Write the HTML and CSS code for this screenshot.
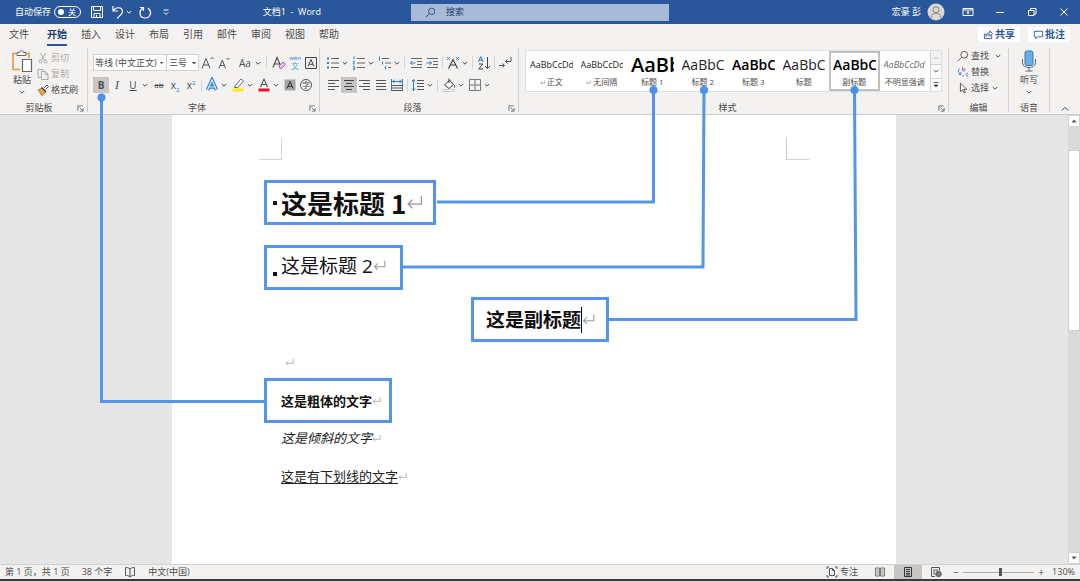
FILE: index.html
```html
<!DOCTYPE html>
<html lang="zh-CN">
<head>
<meta charset="utf-8">
<title>文档1 - Word</title>
<link rel="stylesheet" href="styles.css">
</head>
<body>
<svg class="defs" aria-hidden="true">
  <symbol id="chev" viewBox="0 0 8 8"><path d="M1.8 3 4 5.2 6.2 3" fill="none" stroke="currentColor"/></symbol>
  <symbol id="ret" viewBox="0 0 16 16"><path d="M14.5 2v7.5H2M6 5.500 2 9.500l4 4" fill="none" stroke="currentColor" stroke-width="1.3"/></symbol>
  <symbol id="launch" viewBox="0 0 8 8"><path d="M1 6.500V1h5.500M3 3l3.500 3.500M7 3.500V7H3.500" fill="none" stroke="#666"/></symbol>
  <symbol id="mag" viewBox="0 0 14 14"><circle cx="8.500" cy="5.500" r="4" fill="none" stroke="currentColor"/><path d="M5.500 8.500 1 13" stroke="currentColor"/></symbol>
</svg>

<header class="titlebar">
  <div class="tb-left">
    <label class="autosave">自动保存
      <span class="toggle"><input type="checkbox"><span>关</span></span>
    </label>
    <button class="tb-btn save" aria-label="保存"><svg viewBox="0 0 14 14"><path d="M1.500 1.500h11v11h-11zM3.500 1.500v4h7v-4M4 12.500v-4h6v4M6.500 10v2.500" fill="none" stroke="#fff"/></svg></button>
    <button class="tb-btn undo" aria-label="撤消"><svg viewBox="0 0 14 14"><path d="M2 1v5h5M2.500 5.500C5 1.500 11 2 11.500 6c.2 3-3 5-5.500 7.500" fill="none" stroke="#fff" stroke-width="1.2"/></svg></button>
    <button class="chev light" aria-label="撤消选项"><svg><use href="#chev"/></svg></button>
    <button class="tb-btn redo" aria-label="重复"><svg viewBox="0 0 14 14"><path d="M2 2.500h3.500V6M5.200 3C0 6 1.500 13 7 13s7.500-6.500 3-10" fill="none" stroke="#fff" stroke-width="1.200"/></svg></button>
    <button class="tb-btn more" aria-label="自定义"><svg viewBox="0 0 14 14"><path d="M4.500 5h5M5 7.500l2 2 2-2" fill="none" stroke="#fff"/></svg></button>
    <span class="doc-title">文档1&nbsp; -&nbsp; Word</span>
  </div>
  <label class="search"><svg><use href="#mag"/></svg><input type="text" placeholder="搜索" aria-label="搜索"></label>
  <div class="tb-right">
    <span class="user">宏豪 彭</span>
    <svg class="avatar" viewBox="0 0 18 18"><circle cx="9" cy="9" r="8.500" fill="#d9d6d4"/><circle cx="9" cy="6.800" r="3" fill="none" stroke="#8b8684"/><path d="M4 14.800c0-6 10-6 10 0" fill="none" stroke="#8b8684"/></svg>
    <button class="win" aria-label="功能区显示选项"><svg viewBox="0 0 12 12"><path d="M1 2.500h10v7H1zM1 4h10M6 8.500v-3M4.500 6.800 6 5.500l1.500 1.300" fill="none" stroke="#fff"/></svg></button>
    <button class="win" aria-label="最小化"><svg viewBox="0 0 12 12"><path d="M2 6.500h8" stroke="#fff"/></svg></button>
    <button class="win" aria-label="还原"><svg viewBox="0 0 12 12"><path d="M2.500 4.500h5.500v5H2.500zM4.500 4.500v-2h5.500v5.500H8" fill="none" stroke="#fff"/></svg></button>
    <button class="win" aria-label="关闭"><svg viewBox="0 0 12 12"><path d="m2.500 2.500 7 7m0-7-7 7" stroke="#fff"/></svg></button>
  </div>
</header>

<nav class="tabs">
  <a class="file" href="#">文件</a><a class="active" href="#">开始</a><a href="#">插入</a><a href="#">设计</a><a href="#">布局</a><a href="#">引用</a><a href="#">邮件</a><a href="#">审阅</a><a href="#">视图</a><a href="#">帮助</a>
  <div class="actions">
    <button><svg viewBox="0 0 12 12"><path d="M3.500 5.500h-2v5h8V7M3.500 8c0-3 2-4 4-4V2l3 3-3 3V6c-1.500 0-3 .5-4 2" fill="none" stroke="#2b579a"/></svg>共享</button>
    <button><svg viewBox="0 0 12 12"><path d="M1.500 2.500h9v6H5l-2 2v-2H1.500z" fill="none" stroke="#2b579a"/></svg>批注</button>
  </div>
</nav>

<section class="ribbon">
  <div class="group clipboard">
    <div class="clip-body">
      <button class="paste"><svg viewBox="0 0 22 23"><path d="M5.500 3.500H2v16h7M14.500 3.500H18V8" fill="none" stroke="#e8963c" stroke-width="1.600"/><path d="M6 5.500v-3h2.500c0-2.500 4-2.500 4 0H15v3z" fill="#f3f2f1" stroke="#666"/><path d="M11.500 9.500h9v12h-9z" fill="#fff" stroke="#666" stroke-width="1.200"/></svg><span>粘贴</span><svg class="c"><use href="#chev"/></svg></button>
      <div class="clip-list">
        <button class="off"><svg viewBox="0 0 12 12"><path d="m3.500 1 4 7.500M8.500 1l-4 7.500" stroke="#aaa" fill="none"/><circle cx="3.500" cy="9.500" r="1.500" fill="none" stroke="#aaa"/><circle cx="8.500" cy="9.500" r="1.500" fill="none" stroke="#aaa"/></svg>剪切</button>
        <button class="off"><svg viewBox="0 0 12 12"><path d="M4 9.500H1v-8h5V3M4.500 3.500h4l2.500 2.500v5.500H4.500zM8 3.500v3h3" fill="none" stroke="#aaa"/></svg>复制</button>
        <button><svg viewBox="0 0 12 12"><path d="m7 4 3-3 1.500 1.500-3 3" fill="#fff" stroke="#555"/><path d="m1 6 4-2 4 4-4 3.500z" fill="#f0a050" stroke="#c8702a"/><path d="m4.500 3.500 4.500 4.500" stroke="#444" stroke-width="1.500"/></svg>格式刷</button>
      </div>
    </div>
    <div class="group-label">剪贴板<button aria-label="剪贴板选项"><svg><use href="#launch"/></svg></button></div>
  </div>

  <div class="group">
    <div class="row">
      <select class="font-name" aria-label="字体"><option>等线 (中文正文)</option></select><select class="font-size" aria-label="字号"><option>三号</option></select>
      <button class="ib" aria-label="增大字号"><svg viewBox="0 0 16 16"><path d="m3 13.500 4-10 4 10M4.300 10h5.400M11.500 4 13 2.500 14.500 4" fill="none" stroke="#555"/></svg></button>
      <button class="ib" aria-label="减小字号"><svg viewBox="0 0 16 16"><path d="m4 13.500 3.300-8.500 3.300 8.500M5 10.500h4.500M11.500 3 13 4.500 14.500 3" fill="none" stroke="#555"/></svg></button>
      <button class="ib case">Aa</button><button class="chev" aria-label="更改大小写"><svg><use href="#chev"/></svg></button>
      <i class="sep"></i>
      <button class="ib" aria-label="清除格式"><svg viewBox="0 0 16 16"><path d="m2 12.500 4-10 3.500 8M3.300 9h5" fill="none" stroke="#444" stroke-width="1.100"/><path d="m8 11 4-4 2.500 2.500-4 4H9z" fill="#e3c7ec" stroke="#a35bb8"/></svg></button>
      <button class="ib pinyin" aria-label="拼音指南"><small>wén</small><b>文</b></button>
      <button class="ib" aria-label="字符边框"><svg viewBox="0 0 16 16"><path d="M2.500 2.500h11v11h-11zM5 11.500 8 4.500l3 7M6 9.300h4" fill="none" stroke="#444"/></svg></button>
    </div>
    <div class="row">
      <button class="ib on"><b>B</b></button><button class="ib serif"><i>I</i></button><button class="ib"><u>U</u></button><button class="chev" aria-label="下划线选项"><svg><use href="#chev"/></svg></button><span class="gap"></span>
      <button class="ib small"><s>ab</s></button><button class="ib" aria-label="下标"><span>x<sub>2</sub></span></button><button class="ib" aria-label="上标"><span>x<sup>2</sup></span></button>
      <i class="sep tight"></i>
      <button class="ib" aria-label="文本效果"><svg viewBox="0 0 16 16"><path d="M3.500 13 8 3l4.500 10M5.500 10h5" fill="none" stroke="#2f7fc9" stroke-width="3.400"/><path d="M3.500 13 8 3l4.500 10M5.500 10h5" fill="none" stroke="#d8ecfb" stroke-width="1.200"/></svg></button><button class="chev" aria-label="文本效果选项"><svg><use href="#chev"/></svg></button><span class="gap"></span>
      <button class="ib" aria-label="突出显示"><svg viewBox="0 0 16 16"><path d="m5 9 6-7 2.500 2L8 10.500H4.500z" fill="#fff" stroke="#666"/><path d="M2.500 11.500h11v3h-11z" fill="#ffef00"/></svg></button><button class="chev" aria-label="突出显示选项"><svg><use href="#chev"/></svg></button><span class="gap"></span>
      <button class="ib" aria-label="字体颜色"><svg viewBox="0 0 16 16"><path d="m4.500 10 3.500-8 3.500 8M5.700 7.500h4.600" fill="none" stroke="#555" stroke-width="1.100"/><path d="M2.500 11.500h11v3h-11z" fill="#e81123"/></svg></button><button class="chev" aria-label="字体颜色选项"><svg><use href="#chev"/></svg></button><span class="gap"></span>
      <button class="ib" aria-label="字符底纹"><svg viewBox="0 0 16 16"><path d="M2.500 2.500h11v11h-11z" fill="#a6a6a6"/><path d="m5 11.500 3-7 3 7M6 9.300h4" fill="none" stroke="#333"/></svg></button>
      <button class="ib ring" aria-label="带圈字符"><span>字</span></button>
    </div>
    <div class="group-label">字体<button aria-label="字体选项"><svg><use href="#launch"/></svg></button></div>
  </div>

  <div class="group">
    <div class="row">
      <button class="ib" aria-label="项目符号"><svg viewBox="0 0 16 16"><path d="M6 3.500h8M6 8h8M6 12.500h8" stroke="#666"/><path d="M2 2.500h2v2H2zM2 7h2v2H2zM2 11.500h2v2H2z" fill="#2b7cc4"/></svg></button><button class="chev" aria-label="项目符号选项"><svg><use href="#chev"/></svg></button><span class="gap"></span>
      <button class="ib" aria-label="编号"><svg viewBox="0 0 16 16"><path d="M6 3.500h8M6 8h8M6 12.500h8" stroke="#666"/><path d="M3 1.500v3M2 6.500h1.500L2 9h2M2 11.500h1.500v3H2M2 13h1.500" fill="none" stroke="#2b7cc4" stroke-width=".9"/></svg></button><button class="chev" aria-label="编号选项"><svg><use href="#chev"/></svg></button><span class="gap"></span>
      <button class="ib" aria-label="多级列表"><svg viewBox="0 0 16 16"><path d="M5 3.500h7M8 8h6M11 12.500h3" stroke="#666"/><path d="M2.500 1.500v4M5.500 6.500v3M8.500 11v3" stroke="#2b7cc4"/></svg></button><button class="chev" aria-label="多级列表选项"><svg><use href="#chev"/></svg></button>
      <i class="sep close"></i>
      <button class="ib" aria-label="减少缩进"><svg viewBox="0 0 16 16"><path d="M3 3.500h11M9 6.500h5M9 9.500h5M3 12.500h11" stroke="#666"/><path d="M7.500 8H2.500m2-2-2 2 2 2" fill="none" stroke="#2b7cc4"/></svg></button>
      <button class="ib" aria-label="增加缩进"><svg viewBox="0 0 16 16"><path d="M3 3.500h11M9 6.500h5M9 9.500h5M3 12.500h11" stroke="#666"/><path d="M2.500 8h5m-2-2 2 2-2 2" fill="none" stroke="#2b7cc4"/></svg></button>
      <i class="sep tight"></i>
      <button class="ib" aria-label="中文版式"><svg viewBox="0 0 16 16"><path d="m3.500 13.500 4.500-9 4.500 9M5.500 10h5" fill="none" stroke="#444" stroke-width="1.200"/><path d="m2 2 3 3m0-3L2 5m9-3 3 3m0-3-3 3" stroke="#2b7cc4" stroke-width=".9"/></svg></button><button class="chev" aria-label="中文版式选项"><svg><use href="#chev"/></svg></button>
      <i class="sep close"></i>
      <button class="ib" aria-label="排序"><svg viewBox="0 0 16 16"><path d="m2.500 7 2.300-5.500L7 7M3.500 5.200h2.700" fill="none" stroke="#2b7cc4"/><path d="M2.800 9h4l-4 5h4.400M11.500 2v11.500M9 11l2.500 2.500L14 11" fill="none" stroke="#444"/></svg></button>
      <i class="sep tight"></i>
      <button class="ib" aria-label="显示编辑标记"><svg viewBox="0 0 16 16"><path d="M14 2v4.500H8.500M10.500 4.500l-2 2 2 2M2 10.500h5.500M5.500 8.500l2 2-2 2" fill="none" stroke="#555"/></svg></button>
    </div>
    <div class="row">
      <button class="ib" aria-label="左对齐"><svg viewBox="0 0 16 16"><path d="M3 3.500h11M3 6.500h7M3 9.500h11M3 12.500h7" stroke="#555"/></svg></button>
      <button class="ib on" aria-label="居中"><svg viewBox="0 0 16 16"><path d="M3 3.500h10M5 6.500h6M3 9.500h10M5 12.500h6" stroke="#444"/></svg></button>
      <button class="ib" aria-label="右对齐"><svg viewBox="0 0 16 16"><path d="M2 3.500h11M6 6.500h7M2 9.500h11M6 12.500h7" stroke="#555"/></svg></button>
      <button class="ib" aria-label="两端对齐"><svg viewBox="0 0 16 16"><path d="M3 3.500h10M3 6.500h10M3 9.500h10M3 12.500h10" stroke="#555"/></svg></button>
      <button class="ib" aria-label="分散对齐"><svg viewBox="0 0 16 16"><path d="M3 8.500h10M3 11h10M3 13.500h10" stroke="#555"/><path d="M2.500 2v12M13.500 2v12M3 4.500h10M5.500 2.800 4 4.500l1.500 1.700M10.500 2.800 12 4.500l-1.500 1.700" fill="none" stroke="#2b7cc4"/></svg></button>
      <i class="sep tight"></i>
      <button class="ib" aria-label="行距"><svg viewBox="0 0 16 16"><path d="M7 3.500h7M7 6.500h7M7 9.500h7M7 12.500h7" stroke="#555"/><path d="M3.500 2.500v11M1.800 4.500l1.700-2 1.700 2M1.800 11.500l1.700 2 1.700-2" fill="none" stroke="#2b7cc4"/></svg></button><button class="chev" aria-label="行距选项"><svg><use href="#chev"/></svg></button>
      <i class="sep close"></i>
      <button class="ib" aria-label="底纹"><svg viewBox="0 0 16 16"><path d="m3.500 8 5-5 4 4.500-4.500 4zM8 6V1.500M12.500 7.500c1.500 1 1.500 2.500 1 3" fill="none" stroke="#444"/><path d="M2 12.500h11v2H2z" fill="#fff" stroke="#aaa" stroke-width=".6"/></svg></button><button class="chev" aria-label="底纹选项"><svg><use href="#chev"/></svg></button><span class="gap"></span>
      <button class="ib" aria-label="边框"><svg viewBox="0 0 16 16"><path d="M2.500 2.500h11v11h-11zM8 2.500v11M2.500 8h11" fill="none" stroke="#777"/></svg></button><button class="chev" aria-label="边框选项"><svg><use href="#chev"/></svg></button>
    </div>
    <div class="group-label">段落<button aria-label="段落选项"><svg><use href="#launch"/></svg></button></div>
  </div>

  <div class="group styles">
    <div class="gallery">
      <button class="style"><span class="sample s-body">AaBbCcDd</span><span class="name"><svg class="mini"><use href="#ret"/></svg>正文</span></button>
      <button class="style"><span class="sample s-body">AaBbCcDd</span><span class="name"><svg class="mini"><use href="#ret"/></svg>无间隔</span></button>
      <button class="style"><span class="sample s-h1">AaBb</span><span class="name">标题 1</span></button>
      <button class="style"><span class="sample s-h2">AaBbC</span><span class="name">标题 2</span></button>
      <button class="style"><span class="sample s-h3">AaBbC</span><span class="name">标题 3</span></button>
      <button class="style"><span class="sample s-h2">AaBbC</span><span class="name">标题</span></button>
      <button class="style selected"><span class="sample s-h3">AaBbC</span><span class="name">副标题</span></button>
      <button class="style"><span class="sample s-em">AaBbCcDd</span><span class="name">不明显强调</span></button>
      <div class="gal-nav">
        <button class="dim" aria-label="上一行"><svg viewBox="0 0 8 8"><path d="M2 5l2-2 2 2" fill="none" stroke="#bbb"/></svg></button>
        <button aria-label="下一行"><svg><use href="#chev"/></svg></button>
        <button aria-label="其他样式"><svg viewBox="0 0 8 8"><path d="M1.500 1.500h5M2 4h4L4 6z" fill="#444" stroke="#444" stroke-width=".8"/></svg></button>
      </div>
    </div>
    <div class="group-label">样式<button aria-label="样式选项"><svg><use href="#launch"/></svg></button></div>
  </div>

  <div class="group editing">
    <div class="edit-list">
      <button><svg viewBox="0 0 14 14"><use href="#mag"/></svg>查找<svg class="c far"><use href="#chev"/></svg></button>
      <button><svg viewBox="0 0 14 14"><path d="M6.500 1v5M6.500 4.500c0-2 3-2 3 0s-3 2-3 0" fill="none" stroke="#a35bb8"/><path d="M13 8.500c-3-1-3.500 4 0 3M3.500 3C1 4 1 8 4 9.500M4.500 7v2.800H2M6 11.500h2" fill="none" stroke="#2b7cc4"/></svg>替换</button>
      <button><svg viewBox="0 0 14 14"><path d="M4 1.500v10L6.500 9l1.700 3.800 1.600-.8L8 8.500h3.500z" fill="#fff" stroke="#444"/></svg>选择<svg class="c"><use href="#chev"/></svg></button>
    </div>
    <div class="group-label">编辑</div>
  </div>

  <div class="group voice">
    <button class="dictate"><svg viewBox="0 0 16 22"><path d="M1.500 9v4c0 6 13 6 13 0V9M8 17.500V21M4.500 21h7" fill="none" stroke="#666"/><rect x="4" y="1" width="8" height="14.500" rx="2" fill="#69afe5" stroke="#2b7cc4"/></svg><span>听写</span><svg class="c"><use href="#chev"/></svg></button>
    <div class="group-label">语音</div>
  </div>
  <div class="collapse"><button aria-label="折叠功能区"><svg viewBox="0 0 8 8"><path d="M.8 5.500 4 2.300l3.200 3.200" fill="none" stroke="#444"/></svg></button></div>
</section>

<main class="workspace">
  <div class="desk">
    <article class="page">
      <div class="margins"><i class="corner l"></i><i class="corner r"></i></div>
      <h1 class="callout h1"><i class="dot"></i>这是标题 1<svg><use href="#ret"/></svg></h1>
      <h2 class="callout h2"><i class="dot"></i>这是标题 2<svg><use href="#ret"/></svg></h2>
      <p class="callout subtitle">这是副标题<i class="caret"></i><svg><use href="#ret"/></svg></p>
      <p class="line empty"><svg><use href="#ret"/></svg></p>
      <p class="callout strong"><b>这是粗体的文字</b><svg><use href="#ret"/></svg></p>
      <p class="line"><em>这是倾斜的文字</em><svg><use href="#ret"/></svg></p>
      <p class="line last"><u>这是有下划线的文字</u><svg><use href="#ret"/></svg></p>
    </article>
  </div>
  <div class="scroll">
    <button aria-label="向上滚动"><svg viewBox="0 0 8 8"><path d="M1.500 5.500h5L4 2.500z" fill="#555"/></svg></button>
    <div class="track"><div class="thumb"></div></div>
    <button aria-label="向下滚动"><svg viewBox="0 0 8 8"><path d="M1.500 2.500h5L4 5.500z" fill="#555"/></svg></button>
  </div>
</main>

<footer class="status">
  <span class="pages">第 1 页，共 1 页</span><span class="words">38 个字</span>
  <svg class="book" viewBox="0 0 12 12"><path d="M6 3C4.500 1.500 3 1.500 1.500 1.500v8c1.500 0 3 0 4.500 1.500 1.500-1.500 3-1.500 4.500-1.500v-8C9 1.500 7.500 1.500 6 3zv8" fill="none" stroke="#555"/></svg>
  <span>中文(中国)</span>
  <div class="views">
    <button class="focus"><svg viewBox="0 0 12 12"><path d="M3 1H1v2M1 9v2h2M9 11h2V9M3.500 2.500h3l2 2v5h-5zM6.500 2.500v2h2M9 1h2v2" fill="none" stroke="#555"/></svg>专注</button>
    <button class="view" aria-label="阅读视图"><svg viewBox="0 0 12 12"><path d="M1.500 2h4v8h-4zM6.500 2h4v8h-4zM2.500 4h2m-2 2h2m-2 2h2m3-4h2m-2 2h2m-2 2h2" fill="none" stroke="#666" stroke-width=".9"/></svg></button>
    <button class="view on" aria-label="页面视图"><svg viewBox="0 0 12 12"><path d="M2.500 1.500h7v9h-7zM4 3.500h4M4 5.500h4M4 7.500h4M4 9h4" fill="none" stroke="#333"/></svg></button>
    <button class="view" aria-label="Web 版式"><svg viewBox="0 0 12 12"><path d="M5 10.500H1.500v-9h8v3M3 4h5M3 6h2M3 8h2" fill="none" stroke="#555"/><circle cx="8.500" cy="8" r="2.800" fill="#777" stroke="#444" stroke-width=".7"/></svg></button>
    <button class="zoom-btn" aria-label="缩小">−</button>
    <input type="range" min="0" max="100" value="53" aria-label="缩放">
    <button class="zoom-btn" aria-label="放大">+</button>
    <span class="pct">130%</span>
  </div>
</footer>

<svg class="links" viewBox="0 0 1080 581" aria-hidden="true">
  <g fill="none" stroke="#5495e8" stroke-width="3">
    <path d="M101.500 97v304.500H265"/><path d="M437 202H653.500V90"/><path d="M402 267H703l1-177"/><path d="M608 319.500H856L854.500 90"/>
  </g>
  <g fill="#4a90ec"><circle cx="101.500" cy="97.500" r="4"/><circle cx="653.500" cy="90" r="4"/><circle cx="704" cy="90" r="4"/><circle cx="854.500" cy="90" r="4"/></g>
</svg>
</body>
</html>
```
FILE: styles.css
```css
* { box-sizing: border-box; }
body {
  margin: 0;
  min-height: 100vh;
  display: flex;
  flex-direction: column;
  font-family: "Open Sans", "Noto Sans CJK SC", sans-serif;
  font-size: 9px;
  line-height: 12px;
  color: #4c4c4c;
  background: #f3f2f1;
  overflow: hidden;
}
button, input, select { font: inherit; color: inherit; }
button { border: 0; padding: 0; background: none; display: flex; align-items: center; justify-content: center; }
h1, h2, p { margin: 0; font-weight: normal; }
a { color: inherit; text-decoration: none; }
svg { flex: none; display: block; }
.defs { position: absolute; width: 0; height: 0; }

/* title bar */
.titlebar { display: grid; grid-template-columns: 1fr 258px 1fr; height: 24px; align-items: center; background: #2a579a; color: #fff; }
.tb-left, .tb-right { display: flex; align-items: center; }
.tb-left { padding-left: 15px; }
.autosave { display: flex; align-items: center; gap: 3px; }
.toggle { display: flex; align-items: center; width: 27px; height: 12px; padding: 0 3px; gap: 4px; border: 1px solid #fff; border-radius: 6px; font-size: 8px; }
.toggle input { appearance: none; width: 6px; height: 6px; margin: 0; border-radius: 50%; background: #fff; }
.tb-btn svg { width: 14px; height: 14px; }
.save { margin-left: 9px; }
.undo { margin-left: 7px; }
.redo { margin-left: 5px; }
.more { margin-left: 7px; }
.doc-title { margin-left: auto; margin-right: 90px; }
.search { display: flex; align-items: center; height: 17px; padding-left: 14px; gap: 10px; background: #a7bad8; color: #1f3c6e; }
.search svg { width: 11px; height: 11px; }
.search input { flex: 1; min-width: 0; border: 0; padding: 0; background: none; outline: none; }
.search input::placeholder { color: #1f3c6e; opacity: 1; }
.tb-right { justify-content: flex-end; padding-right: 10px; }
.user { margin-right: 6px; }
.avatar { width: 18px; height: 18px; margin-right: 17px; }
.win svg { width: 12px; height: 12px; }
.win + .win { margin-left: 20px; }

/* tabs */
.tabs { display: flex; gap: 14px; height: 24px; padding: 2px 10px 0 9px; font-size: 10px; line-height: 17px; }
.tabs > a { height: 20px; }
.tabs .file { margin-right: 4px; }
.tabs .active { color: #1f3c6e; font-weight: bold; border-bottom: 2px solid #2a579a; }
.actions { display: flex; gap: 8px; margin-left: auto; padding-top: 1px; }
.actions button { height: 15px; padding: 0 5px; gap: 1px; background: #fff; color: #2b579a; font-weight: bold; font-size: 10px; }
.actions svg { width: 11px; height: 11px; }

/* ribbon */
.ribbon { display: grid; grid-template-columns: 88px 232px 199px 1fr 60px 41px 30px; height: 67px; border-bottom: 1px solid #cfcdcb; }
.group { display: grid; grid-template-rows: 29px 16px 1fr; border-right: 1px solid #d2d0ce; margin-bottom: 2px; padding-left: 5px; }
.row { display: flex; align-items: center; }
.group-label { grid-row: 3; align-self: end; display: grid; grid-template-columns: 1fr auto; column-gap: 8px; height: 10px; align-items: center; text-align: center; margin-right: 3px; }
.group-label button svg { width: 7px; height: 7px; }
.ib { width: 16px; height: 16px; flex: none; font-size: 10px; }
.ib svg { width: 16px; height: 16px; }
.ib.on { background: #c8c6c4; }
.ib.small { font-size: 8px; }
.ib.serif { font-family: "Liberation Serif", serif; font-size: 12px; }
.ib sub, .ib sup { font-size: 6px; line-height: 0; color: #2b7cc4; }
.ib.case { width: 18px; margin-left: 5px; }
.pinyin { flex-direction: column; }
.pinyin small { font-size: 6px; line-height: 5px; color: #2b7cc4; }
.pinyin b { font-size: 8px; line-height: 9px; font-weight: normal; color: #4da3d9; }
.ring span { width: 12px; height: 12px; border: 1px solid #555; border-radius: 50%; font-size: 8px; line-height: 10px; }
.chev, .chev svg, svg.c { width: 8px; height: 8px; }
.gap { width: 2px; }
.sep { width: 1px; height: 13px; margin: 0 4px; background: #d8d6d4; }
.sep.close { margin: 0 3px; }
.sep.tight { margin: 0 2px; }
select {
  appearance: none;
  height: 17px;
  padding: 0 6px 0 1px;
  border: 1px solid #d2d0ce;
  border-radius: 0;
  background-color: #fff;
  background-image: linear-gradient(45deg, transparent 50%, #666 50%), linear-gradient(-45deg, transparent 50%, #666 50%);
  background-size: 2px 2px;
  background-position: right 4px center, right 2px center;
  background-repeat: no-repeat;
}
.font-name { width: 74px; }
.font-size { width: 32px; padding-left: 2px; border-left: 0; }

.clipboard { grid-template-rows: 51px 1fr; padding-left: 9px; }
.clipboard .group-label, .editing .group-label, .voice .group-label { grid-row: 2; }
.clip-body { display: flex; gap: 2px; padding-top: 2px; }
.paste { flex-direction: column; width: 26px; justify-content: flex-start; }
.paste > svg:first-child { width: 22px; height: 23px; }
.paste span { margin: 1px 0 2px; }
.clip-list button { gap: 2px; height: 16px; }
.clip-list svg { width: 12px; height: 12px; }
.off { color: #b0aeac; }

.styles { grid-template-rows: 44px 1fr; padding-left: 6px; }
.styles .group-label { grid-row: 2; }
.gallery { display: grid; grid-template-columns: repeat(8, minmax(0, 1fr)) 11px; height: 42px; margin: 2px 6px 0 0; border: 1px solid #e1dfdd; background: #fff; }
.style { flex-direction: column; padding: 0 4px; align-items: stretch; justify-content: flex-start; overflow: hidden; }
.sample { height: 26px; line-height: 28px; white-space: nowrap; overflow: hidden; text-align: left; color: #222; }
.s-body { font-size: 9px; }
.s-h1 { font-size: 20px; font-weight: 600; color: #000; }
.s-h2 { font-size: 14px; }
.s-h3 { font-size: 14px; font-weight: 600; color: #000; }
.s-em { font-size: 9px; font-style: italic; color: #666; }
.name { display: flex; justify-content: center; align-items: center; font-size: 8px; line-height: 10px; white-space: nowrap; }
.mini { width: 5px; height: 5px; margin-right: 2px; }
.selected { outline: 2px solid #c2c0be; outline-offset: -2px; }
.gal-nav { display: grid; grid-template-rows: repeat(3, 1fr); border-left: 1px solid #d2d0ce; }
.gal-nav button + button { border-top: 1px solid #d2d0ce; }
.gal-nav svg { width: 8px; height: 8px; }
.dim { background: #f3f2f1; }

.editing, .voice { grid-template-rows: 51px 1fr; }
.editing { padding-left: 8px; }
.edit-list button { gap: 2px; height: 16px; }
.edit-list svg:first-child { width: 12px; height: 12px; }
.far { margin-left: 3px; }
.voice { padding-left: 0; }
.voice .group-label, .editing .group-label { grid-template-columns: 1fr; margin-right: 0; }
.editing .group-label { margin-right: 8px; }
.dictate { flex-direction: column; justify-content: flex-start; padding-top: 2px; }
.dictate > svg:first-child { width: 16px; height: 22px; }
.dictate span { margin: 2px 0; }
.collapse { display: flex; align-items: flex-end; justify-content: center; padding-bottom: 1px; }
.collapse svg { width: 8px; height: 8px; }

/* document */
.workspace { flex: 1; display: flex; background: #e6e6e6; }
.desk { flex: 1; display: flex; justify-content: center; }
.page { width: 68%; max-width: 724px; padding: 23px 87px 0; background: #fff; display: flex; flex-direction: column; align-items: flex-start; color: #222; }
.margins { align-self: stretch; display: flex; justify-content: space-between; }
.corner { width: 23px; height: 22px; border-bottom: 1px solid #d4d4d4; }
.corner.l { border-right: 1px solid #d4d4d4; }
.corner.r { border-left: 1px solid #c8c8c8; }
.callout { display: flex; align-items: center; height: 45px; margin-left: 5px; border: 3px solid #5495e8; color: #111; }
.callout svg, .line svg { width: 9px; height: 9px; color: #999; }
.dot { background: #111; }
.h1 { margin-top: 20px; padding: 0 10px 0 6px; font-size: 26px; font-weight: bold; font-family: "Noto Sans CJK SC", sans-serif; }
.h1 .dot { width: 4px; height: 4px; margin-right: 4px; }
.h1 svg { width: 17px; height: 17px; }
.h2 { margin-top: 20px; padding: 0 14px 4px 6px; font-size: 19px; }
.h2 .dot { width: 4px; height: 4px; margin: 16px 4px 0 0; }
.h2 svg, .subtitle svg { width: 13px; height: 13px; }
.subtitle { align-self: center; margin: 7px 0 0 12px; padding: 0 11px 0 12px; font-size: 19px; font-weight: bold; }
.caret { width: 1px; height: 26px; background: #000; }
.line { display: flex; align-items: center; height: 20px; margin: 5px 0 0 22px; font-size: 13px; line-height: 20px; }
.empty { margin: 10px 0 6px 26px; }
.last { margin-top: 18px; }
.strong { padding: 0 8px 0 14px; font-size: 13px; }
.line u { text-underline-offset: 2px; }
.scroll { width: 12px; display: flex; flex-direction: column; background: #dadada; }
.scroll button { height: 12px; background: #fff; border: 1px solid #d0d0d0; }
.scroll button svg { width: 8px; height: 8px; }
.track { flex: 1; padding-top: 23px; }
.thumb { height: 45%; background: #fff; border: 1px solid #d0d0d0; }

/* status bar */
.status { display: flex; align-items: center; height: 17px; padding: 0 5px; border-top: 1px solid #d2d0ce; border-bottom: 2px solid #3a3a3a; }
.words { margin-left: 12px; }
.book { width: 12px; height: 12px; margin: 0 12px; }
.views { display: flex; align-items: center; margin-left: auto; height: 100%; }
.views svg { width: 12px; height: 12px; }
.focus { gap: 2px; margin-right: 8px; }
.view { width: 28px; height: 100%; }
.view.on { background: #c8c6c4; }
.zoom-btn { width: 12px; font-size: 10px; }
.views input { appearance: none; width: 71px; height: 10px; margin: 0 1px; background: linear-gradient(#aaa, #aaa) no-repeat center / 100% 1px; }
.views input::-webkit-slider-thumb { appearance: none; width: 3px; height: 8px; background: #555; }
.pct { margin-left: 5px; }

.links { position: absolute; top: 0; left: 0; width: 1080px; height: 581px; pointer-events: none; }
```
